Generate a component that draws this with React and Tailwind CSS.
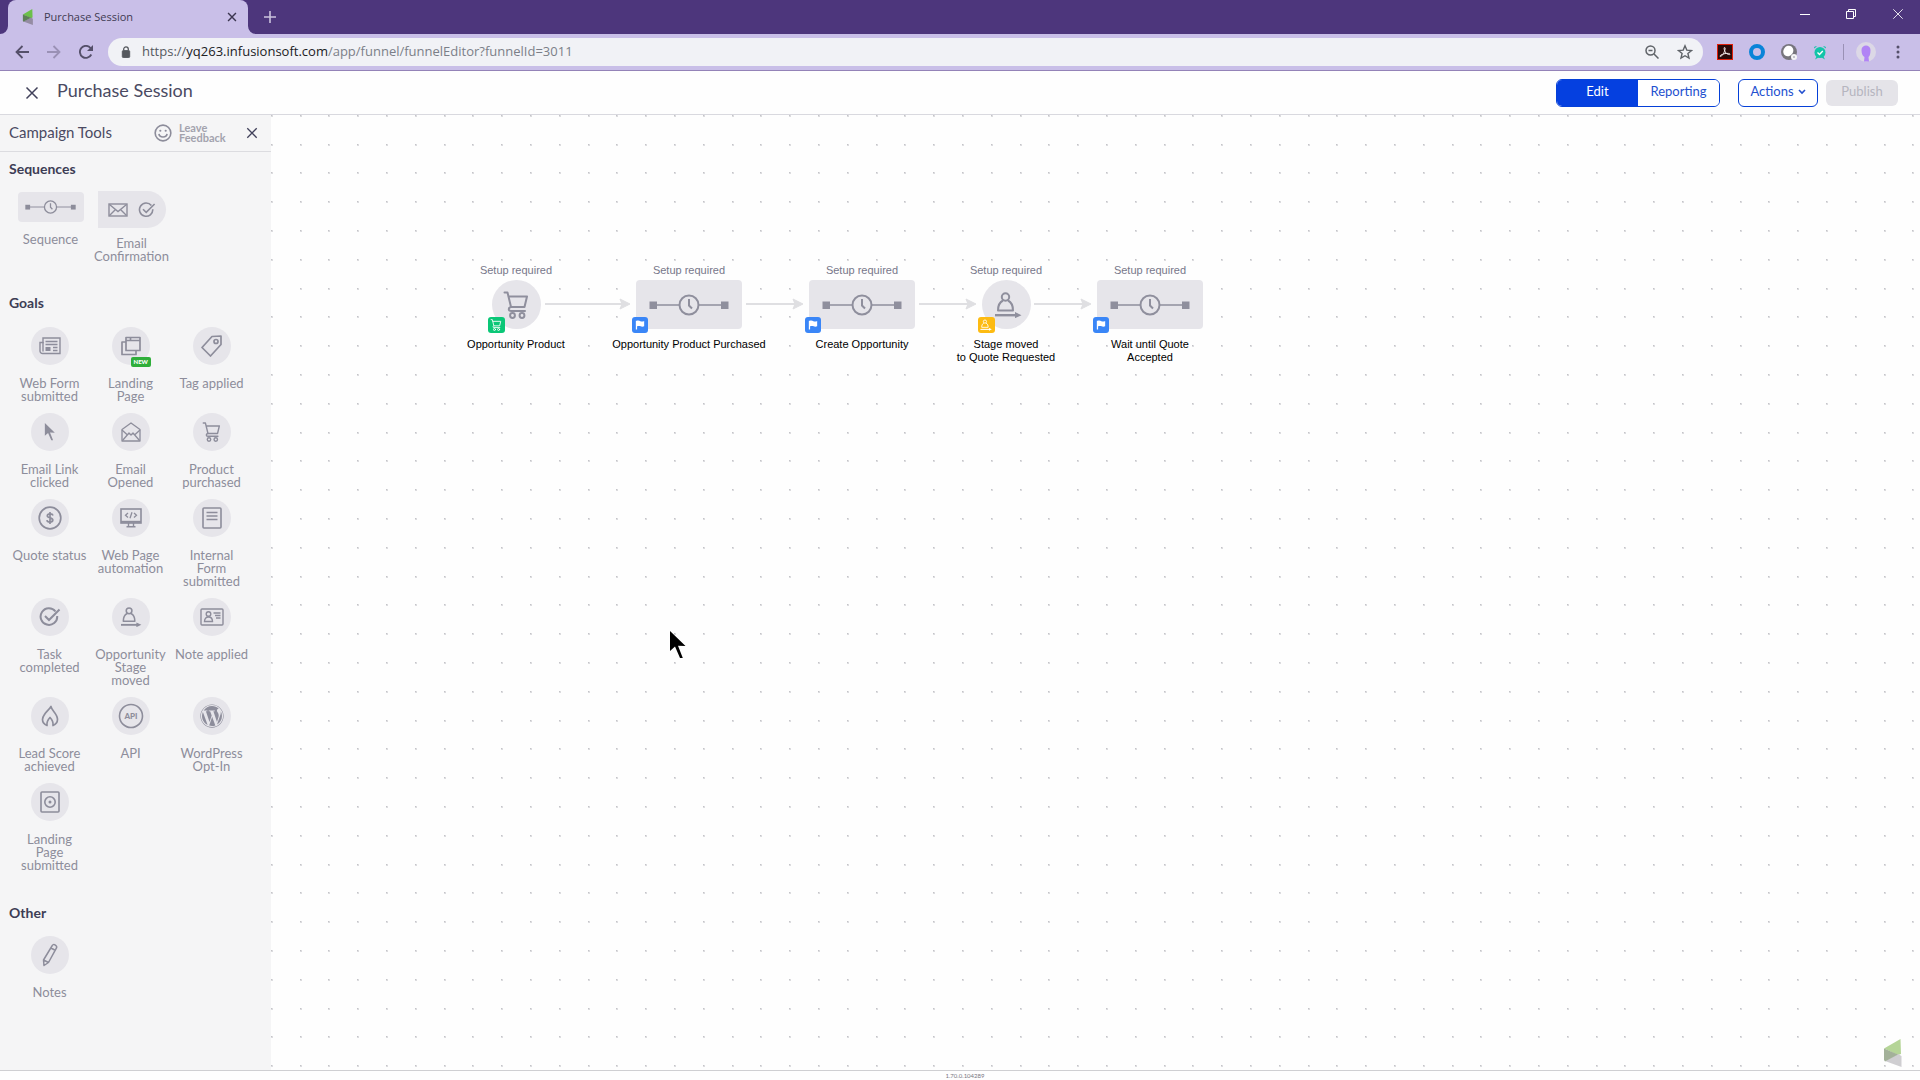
import { useState } from "react";
import { FaWordpress } from "react-icons/fa";

/* ---------- Icons ---------- */

function XIcon({ className }) {
  return (
    <svg viewBox="0 0 14 14" className={className} fill="none" stroke="currentColor">
      <path d="M1.5 1.5 12.5 12.5M12.5 1.5 1.5 12.5" />
    </svg>
  );
}

function BrandLogo({ className }) {
  return (
    <svg viewBox="0 0 18 28" className={className}>
      <path d="M0 9.5 16.5 0 17 15 14 16z" fill="#b5d597" />
      <path d="M1 22 14 15 17.5 17V28z" fill="#cfced1" />
      <path d="M0 9.5 14 15.5 1 22.5 0 21z" fill="#a3b199" />
    </svg>
  );
}

function TabLogo({ className }) {
  return (
    <svg viewBox="0 0 18 28" className={className}>
      <path d="M0 9.5 16.5 0 17 15 14 16z" fill="#6cc04a" />
      <path d="M1 22 14 15 17.5 17V28z" fill="#958ca3" />
      <path d="M0 9.5 14 15.5 1 22.5 0 21z" fill="#5d7f57" />
    </svg>
  );
}

function SequenceIcon({ className }) {
  return (
    <svg viewBox="0 0 80 24" className={className} fill="none" stroke="currentColor" strokeWidth="2">
      <path d="M5 12h25M50 12h25" strokeWidth="1.5" />
      <rect x="0.5" y="8.5" width="7.5" height="7.5" fill="currentColor" stroke="none" />
      <rect x="72" y="8.5" width="7.5" height="7.5" fill="currentColor" stroke="none" />
      <circle cx="40" cy="12" r="9.5" />
      <path d="M40 6v6.5l3 3" />
    </svg>
  );
}

function CartIcon({ className }) {
  return (
    <svg viewBox="0 0 26 28" className={className} fill="none" stroke="currentColor" strokeWidth="2" strokeLinejoin="round" strokeLinecap="round">
      <path d="M1.5 1.5h3l3.5 14.5h13.5L24 5.5H6" />
      <path d="M8 16c-3 .5-3 4 0 4h14" />
      <circle cx="9.5" cy="24.5" r="2.4" />
      <circle cx="19" cy="24.5" r="2.4" />
    </svg>
  );
}

function PersonArrowIcon({ className }) {
  return (
    <svg viewBox="0 0 28 26" className={className} fill="none" stroke="currentColor" strokeWidth="2">
      <circle cx="11.5" cy="5" r="3.7" />
      <path d="M9 8.5C5 10.5 4 14 4 18.5h15c0-4.5-1-8-5-10" strokeLinejoin="round" />
      <path d="M1 23.2h21" strokeWidth="2.4" />
      <path d="m21 20 6.500 3.200-6.500 3z" fill="currentColor" stroke="none" />
    </svg>
  );
}

function FlagIcon({ className }) {
  return (
    <svg viewBox="0 0 12 12" className={className} fill="currentColor">
      <path d="M1 1h1.200C4 .300 5.500 1 6.500 1.500S9.500 2 11 1.200V7.500c-1.500.800-3 .700-4.200.100S4 7 2.500 7.600V11.500H1z" />
    </svg>
  );
}

function EnvelopeIcon({ className }) {
  return (
    <svg viewBox="0 0 20 14" className={className} fill="none" stroke="currentColor" strokeWidth="1.4">
      <rect x="1" y="1" width="18" height="12" />
      <path d="m1.500 1.500 8.500 7 8.500-7M1.500 12.500l6-6M18.500 12.500l-6-6" />
    </svg>
  );
}

function CheckCircleIcon({ className }) {
  return (
    <svg viewBox="0 0 22 20" className={className} fill="none" stroke="currentColor" strokeWidth="2">
      <path d="M16.500 4.500A8.300 8.300 0 1 0 18.200 9" />
      <path d="m6 9 4 4L20.500 2.500" />
    </svg>
  );
}

function FormIcon({ className }) {
  return (
    <svg viewBox="0 0 22 18" className={className} fill="none" stroke="currentColor" strokeWidth="1.4">
      <path d="M4 1h17v15.500H3.500A2.500 2.500 0 0 1 1 14V5.500h3z" />
      <path d="M4 5v9.500" />
      <path d="M6.500 4.500h12M6.500 7.500h12M14 10.500h4.500M14 13.500h4.500" />
      <rect x="6.500" y="10" width="5" height="4" fill="currentColor" stroke="none" />
    </svg>
  );
}

function WindowsIcon({ className }) {
  return (
    <svg viewBox="0 0 20 20" className={className} fill="none" stroke="currentColor" strokeWidth="1.700" strokeLinejoin="round">
      <rect x="5" y="1.500" width="14" height="13" />
      <path d="M5 4.500h14M9.500 1.500v3" />
      <path d="M5 6H1v12.500h14v-4" />
    </svg>
  );
}

function TagIcon({ className }) {
  return (
    <svg viewBox="0 0 22 22" className={className} fill="none" stroke="currentColor" strokeWidth="1.7" strokeLinejoin="round">
      <path d="M11 1.500 20 1v8.500L9.500 21 1 12.500z" />
      <circle cx="15" cy="6.500" r="2" />
    </svg>
  );
}

function PointerIcon({ className }) {
  return (
    <svg viewBox="0 0 16 28" className={className} fill="currentColor">
      <path d="M0 0v20l5-4.500 5 11.500h2.800L8 14.800 15.500 15z" />
    </svg>
  );
}

function OpenMailIcon({ className }) {
  return (
    <svg viewBox="0 0 20 20" className={className} fill="none" stroke="currentColor" strokeWidth="1.300" strokeLinejoin="round">
      <path d="M1 7.500 10 1l9 6.500V19H1z" />
      <path d="m1 8 5.500 5M19 8l-5.500 5M1.500 18.500 8 11l2 2 2-2 6.500 7.500" />
    </svg>
  );
}

function DollarIcon({ className }) {
  return (
    <svg viewBox="0 0 24 24" className={className} fill="none" stroke="currentColor" strokeWidth="1.700">
      <circle cx="12" cy="12" r="10.800" />
      <path d="M15 9.500C14.500 7.500 9.500 7.300 9.300 9.800c0 2.600 5.500 1.600 5.500 4.300-.200 2.600-5.500 2.500-5.900 0M12 6v12" />
    </svg>
  );
}

function MonitorCodeIcon({ className }) {
  return (
    <svg viewBox="0 0 22 20" className={className} fill="none" stroke="currentColor" strokeWidth="1.600">
      <rect x="1" y="1" width="20" height="14" />
      <path d="M1 13.800h20" strokeWidth="2" />
      <path d="M8 5 5.500 7.300 8 9.600M14 5l2.500 2.300L14 9.600M12 4.300l-2 6" strokeWidth="1.300" />
      <path d="M8.500 15v3M13.500 15v3M6.500 18.800h9" strokeWidth="1.400" />
    </svg>
  );
}

function PageLinesIcon({ className }) {
  return (
    <svg viewBox="0 0 20 22" className={className} fill="none" stroke="currentColor" strokeWidth="1.600">
      <rect x="1" y="1" width="18" height="20" rx="1" />
      <path d="M4.500 5.500h11M4.500 9h11M4.500 12.500h11" />
    </svg>
  );
}

function ContactCardIcon({ className }) {
  return (
    <svg viewBox="0 0 24 18" className={className} fill="none" stroke="currentColor" strokeWidth="1.400">
      <rect x="1" y="1" width="22" height="16" rx="1" />
      <circle cx="8.500" cy="6" r="2.300" />
      <path d="M4.500 13.500c0-3 1.500-4.500 4-4.500s4 1.500 4 4.500zM13.500 5h7M15 7.500h5.500M16 10h4.500" />
    </svg>
  );
}

function FlameIcon({ className }) {
  return (
    <svg viewBox="0 0 18 22" className={className} fill="none" stroke="currentColor" strokeWidth="1.700" strokeLinejoin="round">
      <path d="M10 1.500c.500 4 6.500 7 6.500 13 0 3-2 5-4.500 6 .500-4-1-6-3-8-2 2-3.500 4-3 8-2.500-1-4.500-3-4.500-6 0-3 1.500-4 3-6.500 2-2.500 4-4 5.500-6.500z" />
    </svg>
  );
}

function ApiIcon({ className }) {
  return (
    <svg viewBox="0 0 26 26" className={className}>
      <circle cx="13" cy="13" r="11.500" fill="none" stroke="currentColor" strokeWidth="1.600" />
      <text x="13" y="16" textAnchor="middle" fontSize="8" fontWeight="900" fontFamily="Lato, sans-serif" fill="currentColor">
        API
      </text>
    </svg>
  );
}

function TargetPageIcon({ className }) {
  return (
    <svg viewBox="0 0 20 22" className={className} fill="none" stroke="currentColor" strokeWidth="1.600">
      <rect x="1" y="1" width="18" height="20" rx="1" />
      <circle cx="10" cy="11" r="5.200" />
      <circle cx="10" cy="11" r="1.500" fill="currentColor" stroke="none" />
    </svg>
  );
}

function PencilIcon({ className }) {
  return (
    <svg viewBox="0 0 18 24" className={className} fill="none" stroke="currentColor" strokeWidth="1.500" strokeLinejoin="round">
      <path d="M11 3c.500-1.500 2-1.800 3-1.200s2.300 1.500 1.500 3L7.500 19.500 3 22.500l-.500-5.500zM10 5l4.500 2.500M2.500 17l5 2.500" />
    </svg>
  );
}

function SmileIcon({ className }) {
  return (
    <svg viewBox="0 0 20 20" className={className} fill="none" stroke="currentColor" strokeWidth="1.800">
      <circle cx="10" cy="10" r="8.700" />
      <path d="M5.500 11c.500 4.500 8.500 4.500 9 0" />
      <circle cx="7" cy="7.500" r="1.200" fill="currentColor" stroke="none" />
      <circle cx="13" cy="7.500" r="1.200" fill="currentColor" stroke="none" />
    </svg>
  );
}

/* ---------- Data ---------- */

const goals = [
  { label: "Web Form\nsubmitted", icon: FormIcon, size: "w-[22px] h-[18px]" },
  { label: "Landing\nPage", icon: WindowsIcon, size: "w-5 h-5", isNew: true },
  { label: "Tag applied", icon: TagIcon, size: "w-[22px] h-[22px]" },
  { label: "Email Link\nclicked", icon: PointerIcon, size: "w-3 h-[18px]" },
  { label: "Email\nOpened", icon: OpenMailIcon, size: "w-5 h-5" },
  { label: "Product\npurchased", icon: CartIcon, size: "w-[19px] h-5" },
  { label: "Quote status", icon: DollarIcon, size: "w-6 h-6" },
  { label: "Web Page\nautomation", icon: MonitorCodeIcon, size: "w-[22px] h-5" },
  { label: "Internal\nForm\nsubmitted", icon: PageLinesIcon, size: "w-5 h-[22px]" },
  { label: "Task\ncompleted", icon: CheckCircleIcon, size: "w-[22px] h-5" },
  { label: "Opportunity\nStage\nmoved", icon: PersonArrowIcon, size: "w-[22px] h-5" },
  { label: "Note applied", icon: ContactCardIcon, size: "w-6 h-[18px]" },
  { label: "Lead Score\nachieved", icon: FlameIcon, size: "w-[18px] h-[22px]" },
  { label: "API", icon: ApiIcon, size: "w-[26px] h-[26px]" },
  { label: "WordPress\nOpt-In", icon: FaWordpress, size: "w-6 h-6" },
  { label: "Landing\nPage\nsubmitted", icon: TargetPageIcon, size: "w-5 h-[22px]" },
];

const nodes = [
  { label: "Opportunity Product", kind: "purchase", place: "left-[245px]" },
  { label: "Opportunity Product Purchased", kind: "sequence", place: "left-[418px]" },
  { label: "Create Opportunity", kind: "sequence", place: "left-[591px]" },
  { label: "Stage moved\nto Quote Requested", kind: "stage", place: "left-[735px]" },
  { label: "Wait until Quote\nAccepted", kind: "sequence", place: "left-[879px]" },
];

const arrows = [
  [274, 359],
  [475, 532],
  [648, 705],
  [763, 820],
];

// Five dots per 144px tile
const dotColumns = [0, 29, 58, 87, 116];
const dotRows = [0, 29, 57, 86, 115];

/* ---------- Browser frame ---------- */

function BrowserBar() {
  return (
    <div className="shrink-0 bg-[#4d367c] font-['Open_Sans','Noto_Sans',sans-serif]">
      <div className="flex h-[34px] items-stretch">
        <svg viewBox="0 0 8 8" className="h-2 w-2 self-end" fill="#c9bfe8">
          <path d="M8 0v8H0a8 8 0 0 0 8-8z" />
        </svg>
        <div className="flex w-60 items-center rounded-t-lg bg-[#c9bfe8] pl-3.5 pr-[11px]">
          <TabLogo className="h-4 w-3" />
          <span className="ml-2.5 flex-1 text-[11px] text-[#3f3b52]">Purchase Session</span>
          <button aria-label="Close tab" className="text-[#3c3650]">
            <XIcon className="h-2.5 w-2.5 stroke-2" />
          </button>
        </div>
        <svg viewBox="0 0 8 8" className="h-2 w-2 self-end" fill="#c9bfe8">
          <path d="M0 0v8h8a8 8 0 0 1-8-8z" />
        </svg>
        <button aria-label="New tab" className="ml-2 text-[#cbc3dd]">
          <svg viewBox="0 0 12 12" className="h-3 w-3" stroke="currentColor" strokeWidth="1.600">
            <path d="M6 0v12M0 6h12" />
          </svg>
        </button>
        <div className="ml-auto flex items-center gap-9 pb-1.5 pr-4 text-white">
          <button aria-label="Minimize">
            <svg viewBox="0 0 10 10" className="h-2.5 w-2.5" stroke="currentColor">
              <path d="M0 5.500h10" />
            </svg>
          </button>
          <button aria-label="Restore">
            <svg viewBox="0 0 10 10" className="h-2.5 w-2.5" fill="none" stroke="currentColor">
              <path d="M.5 2.500h7v7h-7zM2.500 2.500v-2h7v7h-2" />
            </svg>
          </button>
          <button aria-label="Close window">
            <XIcon className="h-3 w-3" />
          </button>
        </div>
      </div>

      <div className="flex h-[37px] items-center border-b border-[#9483b8] bg-[#c9bfe8] pl-[15px] pr-5">
        <button aria-label="Back" className="text-[#55506a]">
          <svg viewBox="0 0 14 14" className="h-3.5 w-3.5" fill="none" stroke="currentColor" strokeWidth="1.800">
            <path d="M14 7H1.500M7.500 1 1.500 7l6 6" />
          </svg>
        </button>
        <button aria-label="Forward" className="ml-[18px] text-[#9a91b5]">
          <svg viewBox="0 0 14 14" className="h-3.5 w-3.5" fill="none" stroke="currentColor" strokeWidth="1.800">
            <path d="M0 7h12.500M6.500 1l6 6-6 6" />
          </svg>
        </button>
        <button aria-label="Reload" className="ml-[18px] text-[#55506a]">
          <svg viewBox="0 0 14 14" className="h-3.5 w-3.5" fill="none" stroke="currentColor" strokeWidth="1.900">
            <path d="M12.300 9.500A6 6 0 1 1 11.500 3L13 5" />
            <path d="M14 0v6H8z" fill="currentColor" stroke="none" />
          </svg>
        </button>
        <div className="ml-[15px] flex h-7 flex-1 items-center rounded-full bg-[#f1f2f6] pl-[13px] pr-2.5">
          <svg viewBox="0 0 10 13" className="h-3 w-2.5 text-[#55585e]" fill="none" stroke="currentColor">
            <rect x="1" y="5" width="8" height="7.500" rx="1" fill="currentColor" />
            <path d="M2.500 5V3.500a2.500 2.500 0 0 1 5 0V5" strokeWidth="1.400" />
          </svg>
          <a href="#url" className="ml-[11px] flex-1 text-[13px] text-[#7b7f88]">
            <span className="text-[#55585e]">https://</span>
            <span className="text-[#202124]">yq263.infusionsoft.com</span>
            /app/funnel/funnelEditor?funnelId=3011
          </a>
          <button aria-label="Zoom" className="text-[#5f6368]">
            <svg viewBox="0 0 14 14" className="h-3.5 w-3.5" fill="none" stroke="currentColor" strokeWidth="1.500">
              <circle cx="5.500" cy="5.500" r="4.500" />
              <path d="M3.500 5.500h4M9 9l4.500 4.500" />
            </svg>
          </button>
          <button aria-label="Bookmark" className="ml-[18px] text-[#5f6368]">
            <svg viewBox="0 0 16 16" className="h-4 w-4" fill="none" stroke="currentColor" strokeWidth="1.400">
              <path d="m8 1.800 1.800 4.300 4.700.400-3.600 3 1.100 4.600L8 11.700l-4 2.400 1.100-4.600-3.600-3 4.700-.400z" />
            </svg>
          </button>
        </div>
        <div className="ml-3.5 flex items-center gap-4">
          <svg viewBox="0 0 16 16" className="h-4 w-4">
            <rect x=".5" y=".5" width="15" height="15" fill="#2a0a0a" stroke="#e01f0c" />
            <path
              d="M7.500 3.500c1.500 0 0 4-1 6S3.500 13 3 12.300s2.500-2.300 5-2.700 5-.300 5 .600-2.500.300-4-1.200-2.500-5.500-1.500-5.500z"
              fill="none"
              stroke="#f3e9e9"
            />
          </svg>
          <svg viewBox="0 0 16 16" className="h-4 w-4">
            <circle cx="8" cy="8" r="6" fill="none" stroke="#0a84d8" strokeWidth="4" />
          </svg>
          <svg viewBox="0 0 16 16" className="h-4 w-4">
            <circle cx="8" cy="8" r="8" fill="#77757d" />
            <ellipse cx="7.300" cy="7" rx="4.800" ry="5.500" fill="#fff" transform="rotate(35 7.300 7)" />
            <circle cx="13" cy="13" r="3" fill="#f4f4f6" />
            <circle cx="13" cy="13" r="1" fill="#b5b5bd" />
          </svg>
          <svg viewBox="0 0 14 16" className="h-4 w-3.5" fill="#12c4a8">
            <circle cx="7" cy="8.500" r="5.500" />
            <path d="M1 4.500a2 2 0 0 1 3-2zM13 4.500a2 2 0 0 0-3-2zM2 15.500l1.500-3 2 1zM12 15.500l-1.500-3-2 1z" />
            <path d="m4.500 8.500 2 2 3.300-3.500" fill="none" stroke="#fff" strokeWidth="1.400" />
          </svg>
          <div className="h-4 w-px bg-[#9a91b5]" />
          <svg viewBox="0 0 20 20" className="-ml-1 h-5 w-5">
            <circle cx="10" cy="10" r="10" fill="#dcd8e6" />
            <path d="M5.500 8c0-6 9-6 9 0 0 3-.500 6-2 7l.500 4.500H8L8.500 15c-2-1-3-3.500-3-7z" fill="#b184f5" />
          </svg>
          <button aria-label="Menu" className="ml-1 text-[#55506a]">
            <svg viewBox="0 0 4 14" className="h-3.5 w-1" fill="currentColor">
              <circle cx="2" cy="2" r="1.500" />
              <circle cx="2" cy="7" r="1.500" />
              <circle cx="2" cy="12" r="1.500" />
            </svg>
          </button>
        </div>
      </div>
    </div>
  );
}

/* ---------- App header ---------- */

function Header({ mode, setMode }) {
  return (
    <header className="flex h-11 shrink-0 items-center border-b border-[#d9d9df] bg-[#fefefe] pl-[25px] pr-[22px]">
      <button aria-label="Close campaign" className="text-[#41415a]">
        <XIcon className="h-3.5 w-3.5 stroke-[1.5]" />
      </button>
      <h1 className="ml-[18px] flex-1 pb-1.5 text-[18px] leading-6 text-[#4a4a62]">Purchase Session</h1>
      <div className="flex h-7 w-[164px] overflow-hidden rounded-md border border-[#0540d8] text-[13px]">
        {["Edit", "Reporting"].map((name) => (
          <button
            key={name}
            onClick={() => setMode(name)}
            className={
              mode === name
                ? "flex-1 basis-0 bg-[#0540e0] pb-0.5 text-white"
                : "flex-1 basis-0 bg-white pb-0.5 text-[#2350cf]"
            }
          >
            {name}
          </button>
        ))}
      </div>
      <button className="ml-[18px] flex h-7 w-20 items-center justify-center gap-1 rounded-md border border-[#0540d8] bg-white pb-0.5 text-[13px] text-[#2350cf]">
        Actions
        <svg viewBox="0 0 8 6" className="h-1.5 w-2" fill="none" stroke="currentColor" strokeWidth="1.600">
          <path d="m1 1 3 3 3-3" />
        </svg>
      </button>
      <button disabled className="ml-2 h-[26px] w-[72px] rounded-md bg-[#e5e4e9] pb-0.5 text-[13px] text-[#b5b5bf]">
        Publish
      </button>
    </header>
  );
}

/* ---------- Sidebar ---------- */

function Tool({ icon: Icon, label, size, isNew }) {
  return (
    <button className="flex flex-col items-center self-start text-[#8d8d9b]">
      <span className="relative flex h-[38px] w-[38px] items-center justify-center rounded-full bg-[#e6e5ea]">
        <Icon className={size} />
        {isNew && (
          <span className="absolute left-[19px] top-[30px] rounded-[2px] bg-[#2fae3a] px-[3px] text-[6px] font-black leading-[10px] text-white">
            NEW
          </span>
        )}
      </span>
      <span className="mt-3 whitespace-pre text-[13px] leading-[13px]">{label}</span>
    </button>
  );
}

function SectionTitle({ children }) {
  return <h2 className="px-[9px] text-[14px] font-bold leading-[18px] text-[#3d3d55]">{children}</h2>;
}

function Sidebar() {
  return (
    <aside className="w-[271px] shrink-0 bg-[#f5f5f6]">
      <div className="flex h-[37px] items-center border-b border-[#dcdce0] pl-[9px] pr-[13px]">
        <span className="flex-1 pb-0.5 text-[15px] text-[#4a4a62]">Campaign Tools</span>
        <button className="flex items-center gap-[7px] text-[#a3a3ae]">
          <SmileIcon className="h-[18px] w-[18px] text-[#8d8d9b]" />
          <span className="w-[50px] text-left text-[11px] font-bold leading-[10px]">Leave Feedback</span>
        </button>
        <button aria-label="Close tools" className="ml-[17px] text-[#41415a]">
          <XIcon className="h-3 w-3 stroke-[1.5]" />
        </button>
      </div>

      <section className="pt-2">
        <SectionTitle>Sequences</SectionTitle>
        <div className="mt-[13px] grid grid-cols-[81px_81px_81px] px-2.5 text-[13px] leading-[13px] text-[#8d8d9b]">
          <button className="flex flex-col items-center self-start">
            <span className="mt-px flex h-[30px] w-[66px] items-center justify-center rounded-sm bg-[#e6e5ea]">
              <SequenceIcon className="h-4 w-[51px]" />
            </span>
            <span className="mt-[11px]">Sequence</span>
          </button>
          <button className="flex flex-col items-center self-start">
            <span className="flex h-[37px] w-[68px] items-center justify-center gap-2.5 rounded-l-sm rounded-r-full bg-[#e6e5ea]">
              <EnvelopeIcon className="h-3.5 w-5" />
              <CheckCircleIcon className="h-4 w-[18px]" />
            </span>
            <span className="mt-[9px]">Email Confirmation</span>
          </button>
        </div>
      </section>

      <section className="pt-[31px]">
        <SectionTitle>Goals</SectionTitle>
        <div className="mt-[15px] grid grid-cols-[81px_81px_81px] gap-y-2.5 px-[9px]">
          {goals.map((goal) => (
            <Tool key={goal.label} {...goal} />
          ))}
        </div>
      </section>

      <section className="pt-8">
        <SectionTitle>Other</SectionTitle>
        <div className="mt-3.5 grid grid-cols-[81px_81px_81px] px-[9px]">
          <Tool label="Notes" icon={PencilIcon} size="w-[18px] h-6" />
        </div>
      </section>
    </aside>
  );
}

/* ---------- Canvas ---------- */

function NodeShape({ kind }) {
  if (kind === "sequence") {
    return (
      <div className="relative flex h-[49px] w-[106px] items-center justify-center rounded-[4px] bg-[#e6e5ea] text-[#8f8f9d]">
        <SequenceIcon className="h-6 w-20" />
        <span className="absolute -left-1 top-[37px] flex h-4 w-4 items-center justify-center rounded-[3px] bg-[#3a86f7] text-white">
          <FlagIcon className="h-3 w-2.5" />
        </span>
      </div>
    );
  }

  const isStage = kind === "stage";
  return (
    <div className="relative flex h-[49px] w-[49px] items-center justify-center rounded-full bg-[#e6e5ea] text-[#8f8f9d]">
      {isStage ? <PersonArrowIcon className="ml-1 h-[26px] w-7" /> : <CartIcon className="h-7 w-[26px]" />}
      <span
        className={
          isStage
            ? "absolute -left-1 top-[37px] flex h-4 w-[17px] items-center justify-center rounded-[3px] bg-[#fdbb12] text-white"
            : "absolute -left-1 top-[37px] flex h-4 w-[17px] items-center justify-center rounded-[3px] bg-[#0ac777] text-white"
        }
      >
        {isStage ? <PersonArrowIcon className="h-3 w-3" /> : <CartIcon className="h-3 w-3" />}
      </span>
    </div>
  );
}

function Canvas() {
  return (
    <main className="relative flex-1 overflow-hidden bg-[#fefefe] font-['Liberation_Sans',Arial,sans-serif]">
      <svg className="absolute inset-0 h-full w-full">
        <defs>
          <pattern id="dots" x="57" y="0" width="144" height="144" patternUnits="userSpaceOnUse">
            {dotRows.map((y) =>
              dotColumns.map((x) => (
                <g key={`${x}-${y}`}>
                  <rect x={x} y={y} width="2" height="2" fill="#dcdcdf" />
                  <rect x={x} y={y} width="1" height="1" fill="#c4c4c8" />
                </g>
              ))
            )}
          </pattern>
        </defs>
        <rect width="100%" height="100%" fill="url(#dots)" />
        {arrows.map(([from, to]) => (
          <g key={from}>
            <path d={`M${from} 189H${to - 6}`} stroke="#dfdfe2" strokeWidth="2" />
            <path d={`M${to} 189l-10-5 2 5-2 5z`} fill="#dfdfe2" stroke="#dfdfe2" />
          </g>
        ))}
      </svg>

      {nodes.map(({ label, kind, place }) => (
        <div
          key={label}
          className={`absolute top-[149px] flex w-40 -translate-x-1/2 flex-col items-center text-center text-[11px] leading-[13px] ${place}`}
        >
          <span className="mb-[3px] text-[#77778a]">Setup required</span>
          <NodeShape kind={kind} />
          <span className="mt-[9px] whitespace-pre text-black">{label}</span>
        </div>
      ))}

      {/* Mouse pointer */}
      <PointerIcon className="absolute left-[399px] top-[516px] h-7 w-4 text-black" />

      <BrandLogo className="absolute bottom-[3px] right-[18px] h-7 w-[18px]" />
    </main>
  );
}

export default function App() {
  const [mode, setMode] = useState("Edit");

  return (
    <div className="flex min-h-screen flex-col bg-[#fefefe] font-['Lato','Liberation_Sans',sans-serif]">
      <BrowserBar />
      <Header mode={mode} setMode={setMode} />
      <div className="flex flex-1">
        <Sidebar />
        <Canvas />
      </div>
      <footer className="h-2.5 shrink-0 border-t border-[#cfcfd2] pl-2.5 text-center text-[6px] leading-[10px] text-[#77777f]">
        1.70.0.104289
      </footer>
    </div>
  );
}
